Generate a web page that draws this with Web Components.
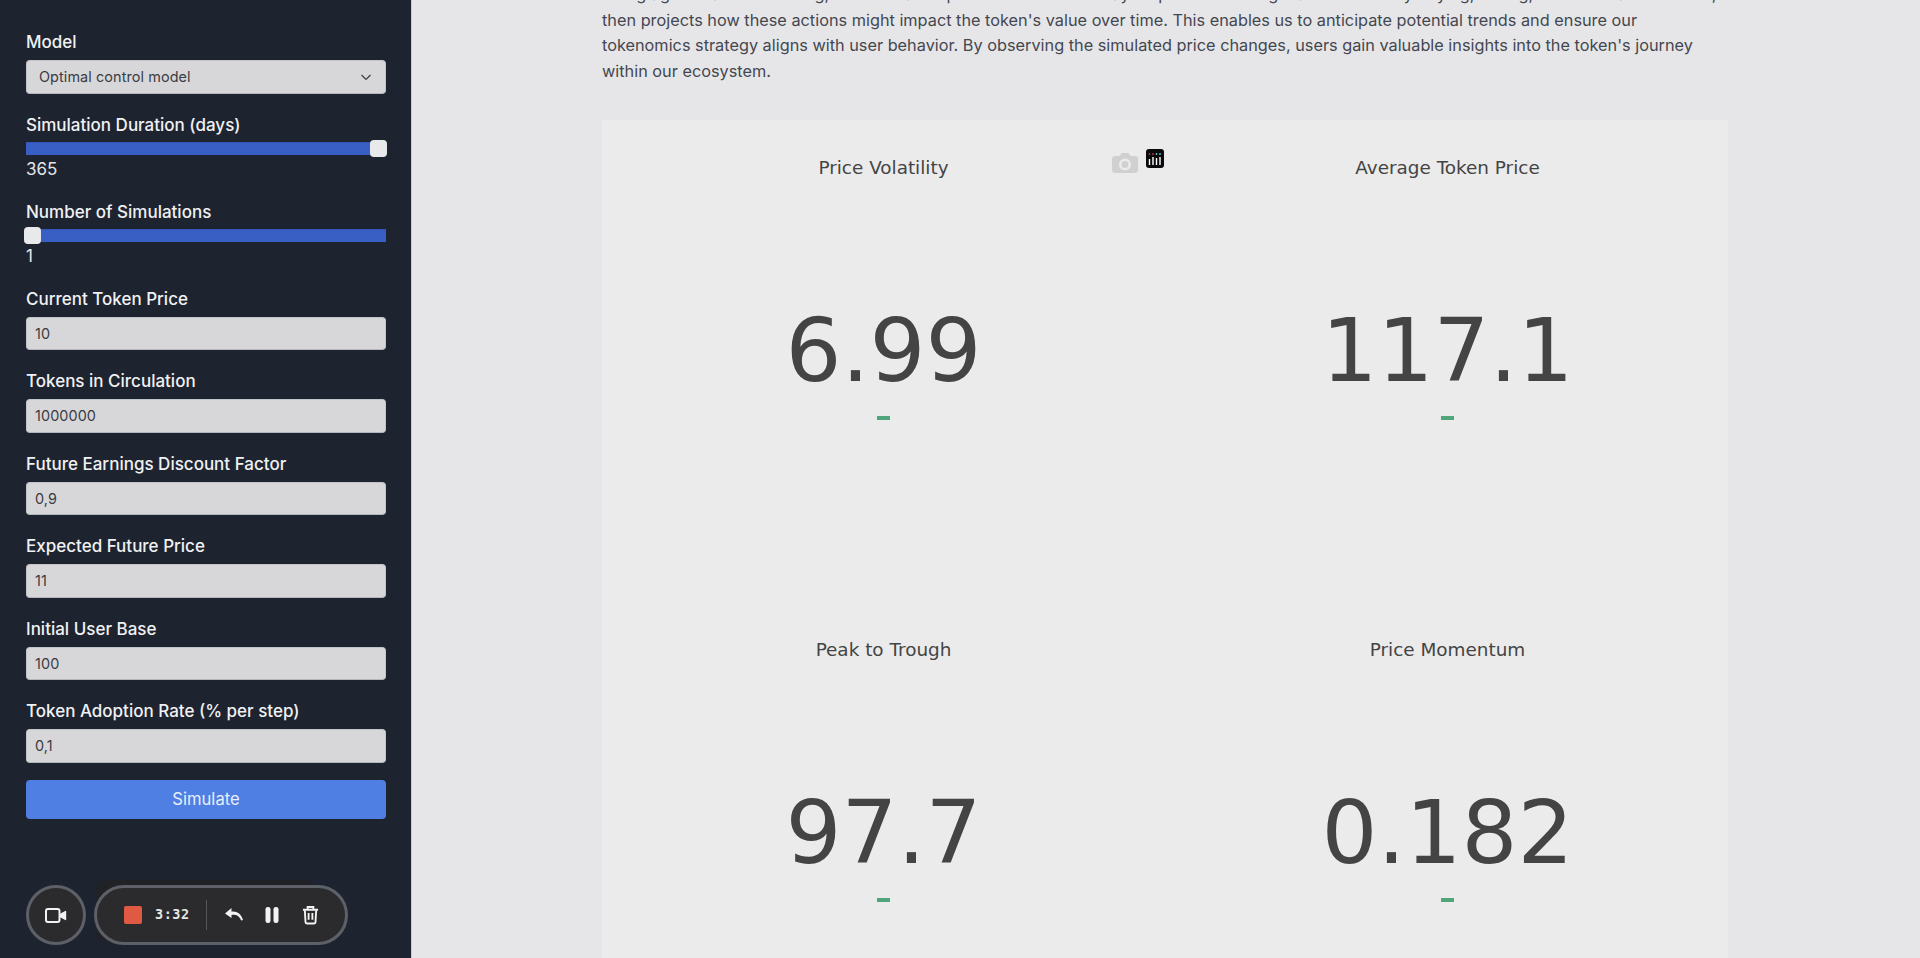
<!DOCTYPE html>
<html>
<head>
<meta charset="utf-8">
<title>Token simulation</title>
<style>
  html, body { margin:0; height:100%; overflow:hidden; background:#e6e6e9; }
  body { font-family:Inter, "Liberation Sans", sans-serif; }
  app-shell { height:100vh; }
</style>
</head>
<body>
<app-shell>
  <side-bar slot="side">
    <select-field label="Model" value="Optimal control model"></select-field>
    <slider-field label="Simulation Duration (days)" value="365" at="end"></slider-field>
    <slider-field label="Number of Simulations" value="1" at="start"></slider-field>
    <input-field label="Current Token Price" value="10"></input-field>
    <input-field label="Tokens in Circulation" value="1000000"></input-field>
    <input-field label="Future Earnings Discount Factor" value="0,9"></input-field>
    <input-field label="Expected Future Price" value="11"></input-field>
    <input-field label="Initial User Base" value="100"></input-field>
    <input-field label="Token Adoption Rate (% per step)" value="0,1"></input-field>
    <action-button>Simulate</action-button>
    <recorder-bar time="3:32"></recorder-bar>
  </side-bar>
  <main-view slot="main">
    <intro-text>Using agent-based modeling, our simulation predicts how users may respond to shifting market trends by buying, selling, or other market events, then projects how these actions might impact the token's value over time. This enables us to anticipate potential trends and ensure our tokenomics strategy aligns with user behavior. By observing the simulated price changes, users gain valuable insights into the token's journey within our ecosystem.</intro-text>
    <chart-panel>
      <metric-tile title="Price Volatility" value="6.99"></metric-tile>
      <metric-tile title="Average Token Price" value="117.1"></metric-tile>
      <metric-tile title="Peak to Trough" value="97.7"></metric-tile>
      <metric-tile title="Price Momentum" value="0.182"></metric-tile>
    </chart-panel>
  </main-view>
</app-shell>

<script>
// small helper so each class only has to carry its markup
function shadow(el, html) {
  el.attachShadow({ mode: 'open' }).innerHTML = html;
  return el.shadowRoot;
}

const labelCss = `
  label { display:block; color:#f0f1f3; font-size:17px; line-height:24px; font-weight:500; }
`;
const boxCss = `
  .box {
    box-sizing:border-box; height:33.5px; margin-top:6px;
    background:#d7d7da; border:1px solid #c3c4c9; border-bottom-color:#b4b6bd; border-radius:4px;
    color:#3a3c42; font-size:14.4px; line-height:31.5px; letter-spacing:.1px;
  }
`;

class AppShell extends HTMLElement {
  constructor() {
    super();
    shadow(this, `
      <style>
        :host { display:flex; width:100%; overflow:hidden; }
        .side { flex:0 0 411px; border-right:1px solid #c9cbd0; background:#1e2330; }
        .main { flex:1 1 auto; min-width:0; overflow:hidden; }
      </style>
      <div class="side"><slot name="side"></slot></div>
      <div class="main"><slot name="main"></slot></div>
    `);
  }
}

class SideBar extends HTMLElement {
  constructor() {
    super();
    shadow(this, `
      <style>
        :host { display:flex; flex-direction:column; box-sizing:border-box; height:958px; padding:30px 25px 0 26px; position:relative; }
      </style>
      <slot></slot>
    `);
  }
}

class SelectField extends HTMLElement {
  connectedCallback() {
    shadow(this, `
      <style>
        :host { display:block; }
        ${labelCss}${boxCss}
        .box { display:flex; justify-content:space-between; align-items:center; padding:0 12px; }
        svg { width:14px; height:14px; }
      </style>
      <label>${this.getAttribute('label')}</label>
      <div class="box"><span>${this.getAttribute('value')}</span>
        <svg viewBox="0 0 14 14" fill="none" stroke="#3a3c42" stroke-width="1.2"><path d="M2.500 5l4.500 4.500L11.500 5"/></svg>
      </div>
    `);
  }
}

class SliderField extends HTMLElement {
  connectedCallback() {
    const atEnd = this.getAttribute('at') === 'end';
    shadow(this, `
      <style>
        :host { display:block; margin-top:19px; }
        ${labelCss}
        .track { position:relative; height:13px; margin-top:5.5px; background:#3a5fc4; border-top:1px solid #3357b8; box-sizing:border-box; }
        .thumb { position:absolute; top:-3px; ${atEnd ? 'right:-1px' : 'left:-2px'}; width:17px; height:17px; border-radius:4px; background:#e8e9eb; }
        .val { color:#e4e6ea; font-size:17px; line-height:24px; margin-top:1.5px; }
      </style>
      <label>${this.getAttribute('label')}</label>
      <div class="track"><div class="thumb"></div></div>
      <div class="val">${this.getAttribute('value')}</div>
    `);
  }
}

class InputField extends HTMLElement {
  connectedCallback() {
    shadow(this, `
      <style>
        :host { display:block; margin-top:19px; }
        ${labelCss}${boxCss}
        .box { padding:0 8px; }
      </style>
      <label>${this.getAttribute('label')}</label>
      <div class="box">${this.getAttribute('value')}</div>
    `);
  }
}

class ActionButton extends HTMLElement {
  constructor() {
    super();
    shadow(this, `
      <style>
        :host { display:block; margin-top:17px; height:39px; border-radius:4px; background:#4f7fe2; color:#e9eefb; font-size:16.6px; line-height:39px; text-align:center; }
      </style>
      <slot></slot>
    `);
  }
}

class RecorderBar extends HTMLElement {
  connectedCallback() {
    shadow(this, `
      <style>
        :host { position:absolute; z-index:0; left:26px; top:885px; display:flex; gap:8px; align-items:center; }
        .cam, .pill { box-sizing:border-box; height:60px; background:#2b2b2d; border:3px solid #5e6068; display:flex; align-items:center; }
        .cam { width:60px; border-radius:50%; justify-content:center; }
        .pill { width:254px; border-radius:30px; padding-left:27px; position:relative; }
        .back { position:absolute; z-index:-1; left:70px; top:-5px; width:219px; height:62px; border-radius:10px; background:#212226; }
        .stop { width:18px; height:18px; border-radius:2px; background:#e05a43; }
        .time { color:#e6e6e6; font:700 13.5px/1 "DejaVu Sans Mono", monospace; letter-spacing:.5px; margin-left:13px; width:33px; white-space:nowrap; }
        .sep { width:1px; height:30px; background:#55565a; margin:0 18px; }
        svg { display:block; flex:none; }
      </style>
      <div class="back"></div>
      <div class="cam">
        <svg width="22" height="15" viewBox="0 0 22 15" fill="none" stroke="#f2f2f2" stroke-width="2" stroke-linejoin="round"><rect x="1" y="1" width="13.500" height="13" rx="2"/><path d="M15 6.500L20.500 3.500v8L15 8.500z" fill="#f2f2f2" stroke-width="1.400"/></svg>
      </div>
      <div class="pill">
        <div class="stop"></div>
        <div class="time">${this.getAttribute('time')}</div>
        <div class="sep"></div>
        <svg width="18" height="14" viewBox="0 0 18 14" fill="#f2f2f2"><path d="M6.500 0L0 5.500 6.500 10V7c4.500-1 8 .8 9.700 5.500l1.800-.6C16 5.500 11.500 2.800 6.500 3.700z"/></svg>
        <svg style="margin-left:22px" width="14" height="16" viewBox="0 0 14 16" fill="#f2f2f2"><rect x="0.500" width="5" height="16" rx="2.200"/><rect x="8.500" width="5" height="16" rx="2.200"/></svg>
        <svg style="margin-left:23px" width="17" height="20" viewBox="0 0 18 20" fill="none" stroke="#f2f2f2" stroke-width="2"><path d="M1 4.500h16M6 4V1.500h6V4"/><path d="M3 5l.7 12.500A1.500 1.500 0 0 0 5.200 19h7.600a1.500 1.500 0 0 0 1.500-1.500L15 5"/><path d="M7 8v7M11 8v7"/></svg>
      </div>
    `);
  }
}

class MainView extends HTMLElement {
  constructor() {
    super();
    shadow(this, `
      <style>
        :host { display:block; box-sizing:border-box; width:1126px; margin-left:190px; }
      </style>
      <slot></slot>
    `);
  }
}

class IntroText extends HTMLElement {
  constructor() {
    super();
    shadow(this, `
      <style>
        /* the page is scrolled a little, first line is cut by the window */
        :host { display:block; margin-top:-18px; color:#44474f; font-size:16.3px; line-height:25.6px; }
      </style>
      <slot></slot>
    `);
  }
}

class ChartPanel extends HTMLElement {
  constructor() {
    super();
    shadow(this, `
      <style>
        :host { display:block; position:relative; margin-top:35.6px; height:900px; background:#ebebec; overflow:hidden; }
        .grid { display:grid; grid-template-columns:563px 565px; grid-auto-rows:482px; }
        .cam { position:absolute; left:510px; top:33px; }
        .bars { position:absolute; left:544px; top:29px; }
      </style>
      <div class="grid"><slot></slot></div>
      <svg class="cam" width="26" height="20" viewBox="0 0 26 20"><path fill="#d0d0d0" fill-rule="evenodd" d="M3 3h4.500L9.500 0h7l2 3H23a3 3 0 0 1 3 3v11a3 3 0 0 1-3 3H3a3 3 0 0 1-3-3V6a3 3 0 0 1 3-3zm10 2.500a6 6 0 1 0 0 12 6 6 0 0 0 0-12zm0 2.500a3.500 3.500 0 1 1 0 7 3.500 3.500 0 0 1 0-7z"/></svg>
      <svg class="bars" width="18" height="19" viewBox="0 0 18 19"><rect width="18" height="19" rx="3" fill="#0a0a0c"/><path stroke="#fff" stroke-width="1.400" d="M3.500 10v6M7 8v8M10.500 9v7M14 8v8"/><path stroke="#b0305a" stroke-width="1.400" d="M3.500 4v2M7 4v2"/><path stroke="#5bb" stroke-width="1.400" d="M10.500 4v2M14 4v2"/></svg>
    `);
  }
}

class MetricTile extends HTMLElement {
  connectedCallback() {
    shadow(this, `
      <style>
        :host { display:flex; flex-direction:column; align-items:center; font-family:"DejaVu Sans", Verdana, sans-serif; color:#444; }
        .title { margin-top:36px; font-size:18.4px; line-height:24px; }
        .val { margin-top:119px; font-size:88px; line-height:104px; }
        .dash { margin-top:13px; width:13px; height:4px; background:#4fa67a; }
      </style>
      <div class="title">${this.getAttribute('title')}</div>
      <div class="val">${this.getAttribute('value')}</div>
      <div class="dash"></div>
    `);
  }
}

customElements.define('app-shell', AppShell);
customElements.define('side-bar', SideBar);
customElements.define('select-field', SelectField);
customElements.define('slider-field', SliderField);
customElements.define('input-field', InputField);
customElements.define('action-button', ActionButton);
customElements.define('recorder-bar', RecorderBar);
customElements.define('main-view', MainView);
customElements.define('intro-text', IntroText);
customElements.define('chart-panel', ChartPanel);
customElements.define('metric-tile', MetricTile);
</script>
</body>
</html>
